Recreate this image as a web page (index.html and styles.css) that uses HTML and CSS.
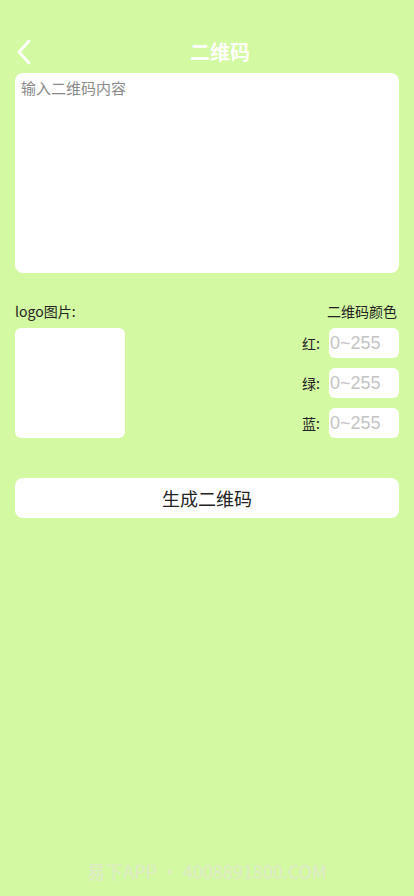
FILE: index.html
```html
<!DOCTYPE html>
<html lang="zh">
<head>
    <meta charset="UTF-8">
    <title>二维码</title>
    <link rel="stylesheet" href="styles.css">
</head>
<body>

<div class="page">
    <header class="nav">
        <span class="back">
            <svg width="16" height="26" viewBox="0 0 16 26"><path d="M13 2 L3 13 L13 24" fill="none" stroke="#fff" stroke-width="3" stroke-linecap="round" stroke-linejoin="round"/></svg>
        </span>
        <h1>二维码</h1>
    </header>

    <textarea class="content" placeholder="输入二维码内容"></textarea>

    <div class="options">
        <div class="logo">
            <div class="label">logo图片:</div>
            <div class="logo-box"></div>
        </div>
        <div class="colors">
            <div class="label">二维码颜色</div>
            <div class="row"><span>红:</span><input type="text" placeholder="0~255"></div>
            <div class="row"><span>绿:</span><input type="text" placeholder="0~255"></div>
            <div class="row"><span>蓝:</span><input type="text" placeholder="0~255"></div>
        </div>
    </div>

    <button class="make">生成二维码</button>

    <div class="mark">易下APP • 4008891800.COM</div>
</div>

</body>
</html>
```

FILE: styles.css
```css
body {
    margin: 0;
    background-color: #d3f9a3;
    font-family: "Noto Sans CJK SC", "Liberation Sans", sans-serif;
    color: #222;
}
.page {
    height: 896px;
    padding: 0 15px;
    box-sizing: border-box;
    display: flex;
    flex-direction: column;
}
.nav {
    height: 73px;
    display: flex;
    align-items: flex-start;
    justify-content: center;
    position: relative;
    padding: 37px 0 0 26px;
    box-sizing: border-box;
}
.back {
    position: absolute;
    left: 1px;
    top: 39px;
}
.nav h1 {
    margin: 0;
    color: #fff;
    font-size: 20px;
    line-height: 30px;
    font-weight: bold;
}
.content {
    height: 200px;
    border: none;
    border-radius: 8px;
    background: #fff;
    padding: 4px 6px;
    font-family: inherit;
    font-size: 15px;
    resize: none;
    box-sizing: border-box;
    outline: none;
}
.content::placeholder { color: #8a8a8a; }
.options {
    display: flex;
    justify-content: space-between;
    margin-top: 28px;
}
.label {
    font-size: 14px;
    line-height: 20px;
    height: 27px;
}
.logo-box {
    width: 110px;
    height: 110px;
    background: #fff;
    border-radius: 6px;
}
.colors {
    display: flex;
    flex-direction: column;
    align-items: flex-end;
    gap: 10px;
}
.colors .label {
    height: 17px;
    margin-right: 2px;
}
.row {
    display: flex;
    align-items: center;
    gap: 9px;
    font-size: 14px;
}
.row input {
    width: 70px;
    height: 30px;
    border: none;
    border-radius: 6px;
    background: #fff;
    padding: 0 1px;
    box-sizing: border-box;
    font-family: "Liberation Sans", sans-serif;
    font-size: 18px;
    outline: none;
}
.row input::placeholder { color: #c4c4c4; }
.make {
    margin-top: 40px;
    height: 40px;
    border: none;
    border-radius: 8px;
    background: #fff;
    font-family: inherit;
    font-size: 18px;
    color: #222;
}
.mark {
    margin-top: auto;
    margin-bottom: 12px;
    text-align: center;
    font-size: 18px;
    color: #dfe9c8;
}
```
